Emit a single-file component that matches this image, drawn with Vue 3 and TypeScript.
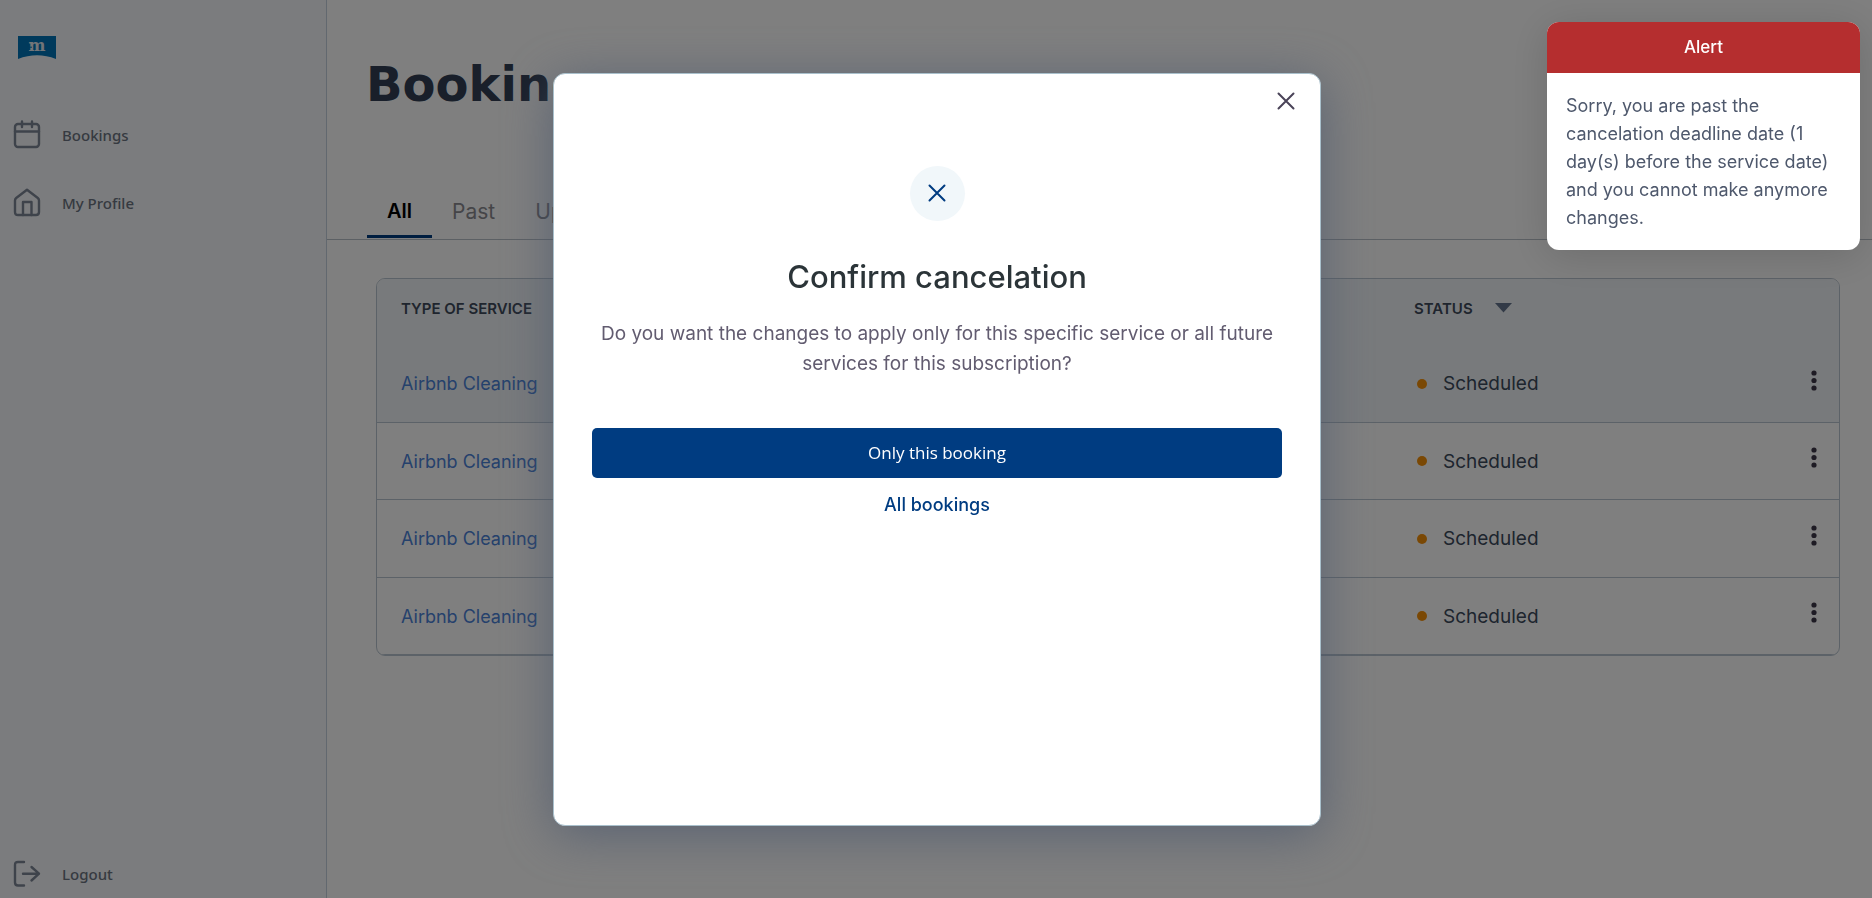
<script setup lang="ts">
import { ref } from 'vue'

interface Booking {
  id: number
  service: string
  status: string
}

const tabs = ['All', 'Past', 'Upcoming']
const activeTab = ref('All')

const bookings: Booking[] = [1, 2, 3, 4].map((id) => ({
  id,
  service: 'Airbnb Cleaning',
  status: 'Scheduled',
}))
</script>

<template>
  <div class="app">
    <nav class="sidebar">
      <a class="logo" href="#" aria-label="Home">
        <svg width="38" height="23" viewBox="0 0 38 23">
          <path d="M0 0H38V23Q19 15.500 0 23Z" fill="#0074b8" />
          <text x="19" y="15" text-anchor="middle" class="logo-letter">m</text>
          <path d="M9 11.200H14" stroke="#0074b8" stroke-width="1" />
        </svg>
      </a>
      <a class="nav-item" href="#">
        <svg width="28" height="30" viewBox="0 0 28 30" class="line-icon">
          <rect x="2" y="4" width="24" height="23" rx="3" />
          <path d="M2 11.500H26M9 1.500V7M19 1.500V7" />
        </svg>
        <span>Bookings</span>
      </a>
      <a class="nav-item" href="#">
        <svg width="28" height="30" viewBox="0 0 28 30" class="line-icon">
          <path d="M2 12.500Q2 11 3.200 10L14 1.800L24.800 10Q26 11 26 12.500V24Q26 27 23 27H5Q2 27 2 24Z" />
          <path d="M10 27V14H18.500V27" />
        </svg>
        <span>My Profile</span>
      </a>
      <button class="nav-item logout" type="button">
        <svg width="28" height="30" viewBox="0 0 28 30" class="line-icon">
          <path d="M11 3H5Q2 3 2 6V23.500Q2 26.500 5 26.500H11M10 14.700H26M18.500 8L26 14.700L18.500 21.500" />
        </svg>
        <span>Logout</span>
      </button>
    </nav>

    <main class="content">
      <h1>Bookings</h1>
      <div class="tabs" role="tablist">
        <button
          v-for="tab in tabs"
          :key="tab"
          type="button"
          role="tab"
          :aria-selected="tab === activeTab"
          :class="['tab', { active: tab === activeTab }]"
          @click="activeTab = tab"
        >
          {{ tab }}
        </button>
      </div>
      <div class="table-card">
        <table>
          <thead>
            <tr>
              <th class="col-service" scope="col">TYPE OF SERVICE</th>
              <th class="col-status" scope="col">
                <span class="sortable">
                  STATUS
                  <svg width="17" height="10" viewBox="0 0 17 10"><path d="M0 0H17L8.500 9.500Z" fill="#64748f" /></svg>
                </span>
              </th>
              <th class="col-menu"></th>
            </tr>
          </thead>
          <tbody>
            <tr v-for="booking in bookings" :key="booking.id">
              <td class="col-service"><a href="#">{{ booking.service }}</a></td>
              <td class="col-status">
                <span class="status">{{ booking.status }}</span>
              </td>
              <td class="col-menu">
                <button type="button" class="kebab" aria-label="Booking options">
                  <svg width="6" height="22" viewBox="0 0 6 22" fill="#3c3748">
                    <circle cx="3" cy="3" r="2.600" />
                    <circle cx="3" cy="10.500" r="2.600" />
                    <circle cx="3" cy="18" r="2.600" />
                  </svg>
                </button>
              </td>
            </tr>
          </tbody>
        </table>
      </div>
    </main>

    <div class="overlay">
      <section class="dialog" role="dialog" aria-modal="true" aria-labelledby="dialog-title">
        <button type="button" class="close" aria-label="Close">
          <svg width="18" height="18" viewBox="0 0 18 18"><path d="M1.500 1.500L16.500 16.500M16.500 1.500L1.500 16.500" /></svg>
        </button>
        <div class="badge">
          <svg width="18" height="18" viewBox="0 0 18 18"><path d="M1.500 1.500L16.500 16.500M16.500 1.500L1.500 16.500" /></svg>
        </div>
        <h2 id="dialog-title">Confirm cancelation</h2>
        <p>Do you want the changes to apply only for this specific service or all future services for this subscription?</p>
        <button type="button" class="primary">Only this booking</button>
        <button type="button" class="secondary">All bookings</button>
      </section>
    </div>

    <aside class="alert" role="alert">
      <header>Alert</header>
      <p>Sorry, you are past the cancelation deadline date (1 day(s) before the service date) and you cannot make anymore changes.</p>
    </aside>
  </div>
</template>

<style>
body {
  margin: 0;
  background: #fff;
}
</style>

<style scoped>
* {
  box-sizing: border-box;
}

.app {
  display: flex;
  min-height: 100vh;
  font-family: Inter, "Liberation Sans", sans-serif;
  color: #3c4a5c;
}

button {
  padding: 0;
  border: 0;
  background: none;
  font: inherit;
  cursor: pointer;
}

a {
  text-decoration: none;
}

svg {
  display: block;
}

.sidebar {
  display: flex;
  flex-direction: column;
  width: 327px;
  padding: 36px 13px 8px;
  border-right: 1px solid #c4d1de;
  background: #f7f9fc;
}

.logo {
  margin: 0 0 60px 5px;
}

.logo-letter {
  font: bold 16px "DejaVu Serif", serif;
  fill: #e6ebf0;
}

.nav-item {
  display: flex;
  align-items: center;
  gap: 21px;
  height: 32px;
  margin-bottom: 36px;
  color: #6c7582;
  font: 500 15px "Noto Sans", sans-serif;
}

.line-icon {
  fill: none;
  stroke: #7d8696;
  stroke-width: 2.4;
  stroke-linecap: round;
  stroke-linejoin: round;
}

.logout {
  margin: auto 0 0;
}

.content {
  flex: 1;
  min-width: 0;
}

h1 {
  margin: 48px 0 0 39px;
  color: #323f55;
  font: 700 48px/72px "DejaVu Sans", sans-serif;
}

.tabs {
  display: flex;
  height: 72px;
  margin-top: 48px;
  padding-left: 40px;
  border-bottom: 1px solid #b9c0c8;
}

.tab {
  height: 70px;
  padding: 20px 20px 0;
  border-bottom: 3px solid transparent;
  color: #8a8a90;
  font-size: 21px;
}

.tab.active {
  padding-top: 18px;
  color: #000;
  border-bottom-color: #003c81;
  font-size: 20px;
  font-weight: 600;
}

.table-card {
  margin: 38px 32px 0 49px;
  border: 1px solid #b9c5d0;
  border-radius: 9px;
  overflow: hidden;
}

table {
  width: 100%;
  border-collapse: separate;
  border-spacing: 0;
  table-layout: fixed;
}

th,
td {
  padding: 0;
  text-align: left;
}

thead,
tbody tr:first-child {
  background: #f1f5f8;
}

th {
  height: 66px;
  padding-bottom: 8px;
  color: #3f4b5c;
  font-size: 15px;
  font-weight: 600;
}

td {
  height: 78px;
  border-bottom: 1px solid #b9c5d0;
  font-size: 18px;
}

tbody tr:nth-child(even) td {
  height: 77px;
}

.col-service {
  padding-left: 24px;
}

.col-status {
  width: 379px;
}

.col-menu {
  width: 46px;
}

td a {
  color: #4b83d9;
}

.sortable {
  display: flex;
  align-items: center;
  gap: 22px;
}

.status {
  display: flex;
  align-items: center;
  gap: 16px;
  padding-left: 3px;
  font-size: 19px;
}

.status::before {
  content: "";
  width: 10px;
  height: 10px;
  border-radius: 50%;
  background: #f59008;
}

.kebab {
  display: block;
  padding: 0 18px 6px;
}

.overlay {
  position: fixed;
  inset: 0;
  display: flex;
  align-items: center;
  justify-content: center;
  padding: 1px 0 0 2px;
  background: rgba(0, 0, 0, 0.5);
}

.dialog {
  display: flex;
  flex-direction: column;
  align-items: center;
  width: 768px;
  max-width: 92%;
  height: 84%;
  padding: 18px 38px;
  border: 1px solid #a9c0cc;
  border-radius: 12px;
  background: #fff;
  box-shadow: 0 8px 50px rgba(76, 88, 110, 0.75);
  text-align: center;
}

.dialog path {
  fill: none;
  stroke: #4a4358;
  stroke-width: 2;
  stroke-linecap: round;
}

.close {
  align-self: flex-end;
  margin-right: -13px;
}

.badge {
  display: grid;
  place-items: center;
  flex: none;
  width: 55px;
  height: 55px;
  margin-top: 56px;
  border-radius: 50%;
  background: #f1f7fa;
}

.dialog .badge path {
  stroke: #003c81;
}

h2 {
  margin: 38px 0 0;
  color: #2b3438;
  font-size: 31px;
  font-weight: 500;
  line-height: 36px;
}

.dialog p {
  margin: 24px 0 0;
  color: #625c70;
  font-size: 19px;
  line-height: 30px;
}

.primary {
  width: 100%;
  height: 50px;
  flex: none;
  margin-top: 49px;
  border-radius: 5px;
  background: #003c81;
  color: #fff;
  font: 17px "Open Sans", sans-serif;
}

.secondary {
  margin-top: 14px;
  color: #003c81;
  font-size: 18px;
  font-weight: 500;
  line-height: 26px;
}

.alert {
  position: fixed;
  top: 22px;
  right: 12px;
  width: 313px;
  border-radius: 12px;
  overflow: hidden;
  background: #fff;
  box-shadow: 0 6px 40px rgba(0, 0, 0, 0.15);
}

.alert header {
  background: #b52e2f;
  color: #fff;
  font-size: 17px;
  font-weight: 500;
  line-height: 51px;
  text-align: center;
}

.alert p {
  margin: 0;
  padding: 19px 19px 18px;
  color: #4e586c;
  font-size: 18px;
  line-height: 28px;
}
</style>
